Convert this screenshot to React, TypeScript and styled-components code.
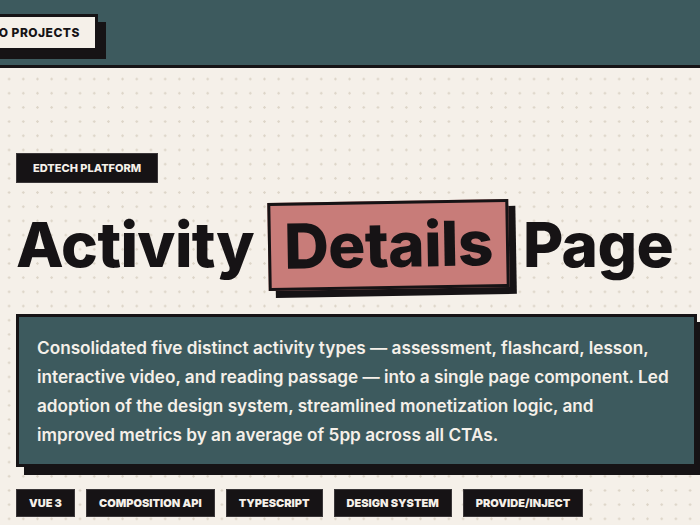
import React from "react";
import styled, { createGlobalStyle } from "styled-components";

const ink = "#161315";
const teal = "#3d5a5e";
const cream = "#f5f0e9";
const rose = "#c87c79";

const GlobalStyle = createGlobalStyle`
  html, body {
    margin: 0;
    padding: 0;
    overflow: hidden;
  }
  body {
    background: ${cream};
    font-family: Inter, "Liberation Sans", sans-serif;
    color: ${ink};
  }
`;

const tags = ["Vue 3", "Composition API", "TypeScript", "Design System", "Provide/Inject"];

const App: React.FC = () => {
  return (
    <Page>
      <GlobalStyle />
      <Header>
        <BackButton>← Back to Projects</BackButton>
      </Header>
      <Main>
        <Category>EdTech Platform</Category>
        <Title>
          <span>Activity</span>
          <Highlight>Details</Highlight>
          <span>Page</span>
        </Title>
        <Summary>
          Consolidated five distinct activity types — assessment, flashcard, lesson,
          interactive video, and reading passage — into a single page component. Led
          adoption of the design system, streamlined monetization logic, and
          improved metrics by an average of 5pp across all CTAs.
        </Summary>
        <TagRow>
          {tags.map((t) => (
            <Tag key={t}>{t}</Tag>
          ))}
        </TagRow>
      </Main>
    </Page>
  );
};

export default App;

const Page = styled.div`
  width: 700px;
  height: 525px;
  overflow: hidden;
  background-color: ${cream};
  background-image: radial-gradient(circle, #ddd5c8 1px, transparent 1.4px);
  background-size: 14.2px 14.2px;
  background-position: 2px 1px;
`;

const Header = styled.header`
  height: 68px;
  background: ${teal};
  border-bottom: 3px solid ${ink};
  display: flex;
  align-items: flex-start;
  padding-top: 14px;
  box-sizing: border-box;
`;

const BackButton = styled.button`
  margin-left: -82px;
  height: 37px;
  padding: 0 15px;
  background: ${cream};
  border: 3px solid ${ink};
  box-shadow: 8px 8px 0 ${ink};
  font-family: Inter, "Liberation Sans", sans-serif;
  font-weight: 800;
  font-size: 12px;
  letter-spacing: 0.04em;
  text-transform: uppercase;
  color: ${ink};
`;

const Main = styled.main`
  padding: 85px 3px 0 16px;
  display: flex;
  flex-direction: column;
  align-items: flex-start;
`;

const Category = styled.div`
  height: 30px;
  padding: 0 16px;
  display: flex;
  align-items: center;
  background: ${ink};
  border: 1px solid #3a3638;
  box-sizing: border-box;
  color: ${cream};
  font-weight: 800;
  font-size: 11px;
  letter-spacing: 0;
  text-transform: uppercase;
`;

const Title = styled.h1`
  margin: 18px 0 0;
  display: flex;
  align-items: center;
  gap: 14px;
  font-weight: 800;
  font-size: 62px;
  line-height: 1;
  letter-spacing: -0.01em;
  color: ${ink};
`;

const Highlight = styled.span`
  display: inline-block;
  padding: 10px 13px;
  background: ${rose};
  border: 3px solid ${ink};
  box-shadow: 7px 7px 0 ${ink};
  transform: rotate(-1deg);
`;

const Summary = styled.p`
  margin: 25px 0 0;
  align-self: stretch;
  padding: 16px 24px 15px 18px;
  background: ${teal};
  border: 3px solid ${ink};
  box-shadow: 8px 8px 0 ${ink};
  color: ${cream};
  font-weight: 600;
  font-size: 17.2px;
  line-height: 29px;
`;

const TagRow = styled.div`
  margin-top: 22px;
  display: flex;
  gap: 11px;
`;

const Tag = styled.span`
  height: 28px;
  padding: 0 12px;
  display: flex;
  align-items: center;
  background: ${ink};
  border: 1px solid #3a3638;
  box-sizing: border-box;
  color: ${cream};
  font-weight: 900;
  font-size: 11px;
  letter-spacing: 0;
  text-transform: uppercase;
`;
